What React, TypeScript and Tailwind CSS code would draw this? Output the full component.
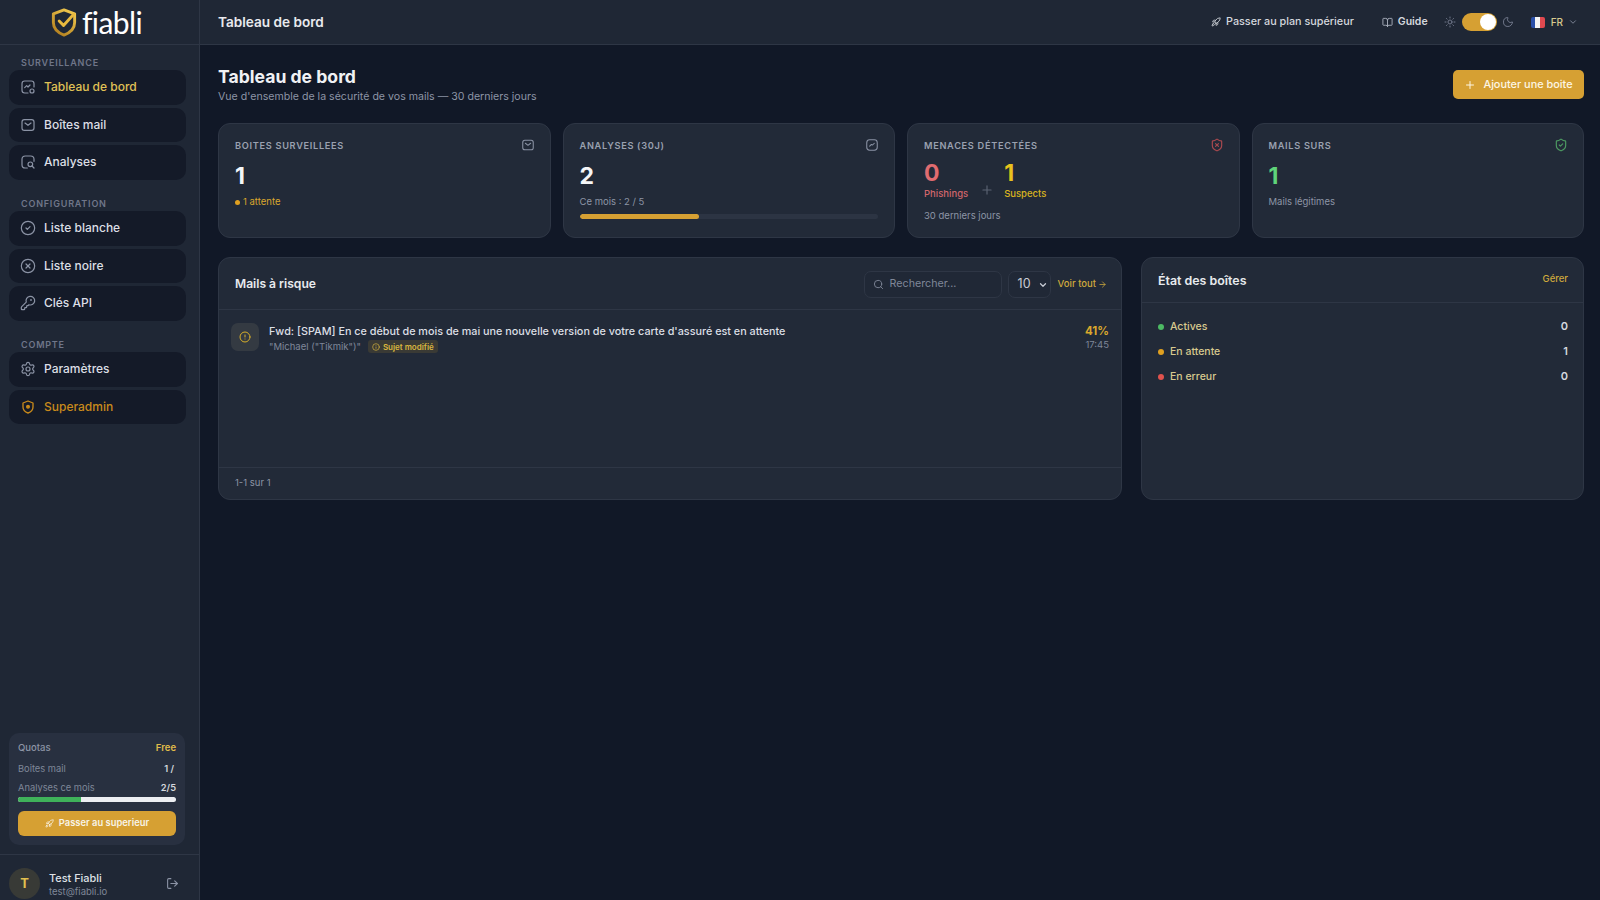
import { ArrowRight, BookOpen, ChevronDown, CircleAlert, CircleCheck, CircleX, Info, KeyRound, LogOut, Moon, Plus, Rocket, Search, Settings, ShieldCheck, ShieldX, Sun } from 'lucide-react';
import type { ReactNode } from 'react';

const font = "font-['Inter','Liberation_Sans',sans-serif]";

// Icones maison : lucide n'a pas exactement ces formes
function DashIcon() {
  return (
    <svg width="16" height="16" viewBox="0 0 24 24" fill="none" stroke="currentColor" strokeWidth="1.8" strokeLinecap="round" strokeLinejoin="round">
      <path d="M12 21H7a4 4 0 0 1-4-4V7a4 4 0 0 1 4-4h10a4 4 0 0 1 4 4v5" />
      <path d="M7 13l3-3 2 2 3-3" />
      <circle cx="18" cy="18" r="3" />
    </svg>
  );
}

function MailIcon({ size = 16 }: { size?: number }) {
  return (
    <svg width={size} height={size} viewBox="0 0 24 24" fill="none" stroke="currentColor" strokeWidth="1.8" strokeLinecap="round" strokeLinejoin="round">
      <rect x="3" y="4" width="18" height="16" rx="3.5" />
      <path d="M7.5 9l4.5 3.5L16.5 9" />
    </svg>
  );
}

function ScanIcon() {
  return (
    <svg width="16" height="16" viewBox="0 0 24 24" fill="none" stroke="currentColor" strokeWidth="1.8" strokeLinecap="round" strokeLinejoin="round">
      <path d="M11 21H8a5 5 0 0 1-5-5V8a5 5 0 0 1 5-5h8a5 5 0 0 1 5 5v3" />
      <circle cx="15.5" cy="15.5" r="3.5" />
      <path d="M18 18l3 3" />
    </svg>
  );
}

function ChartIcon() {
  return (
    <svg width="14" height="14" viewBox="0 0 24 24" fill="none" stroke="currentColor" strokeWidth="1.8" strokeLinecap="round" strokeLinejoin="round">
      <rect x="3" y="3" width="18" height="18" rx="5" />
      <path d="M8 14l3-3 2 1 3-3" />
    </svg>
  );
}

function AdminIcon() {
  return (
    <svg width="16" height="16" viewBox="0 0 24 24" fill="none" stroke="currentColor" strokeWidth="2" strokeLinecap="round" strokeLinejoin="round">
      <path d="M12 3l7.5 3v6c0 4.500-3 7.500-7.500 9-4.500-1.500-7.500-4.500-7.500-9V6z" />
      <circle cx="12" cy="11.500" r="2" fill="currentColor" />
    </svg>
  );
}

function FlagFr() {
  return (
    <span className="flex h-[11px] w-[14px] overflow-hidden rounded-[2px]">
      <span className="flex-1 bg-[#2a4fa8]" />
      <span className="flex-1 bg-[#f4f4f4]" />
      <span className="flex-1 bg-[#e0494f]" />
    </span>
  );
}

function Logo() {
  return (
    <div className="flex items-center gap-[5px] pr-[6px]">
      <svg width="26" height="29" viewBox="0 0 26 30" fill="none">
        <defs>
          <linearGradient id="logoGold" x1="0.8" y1="0" x2="0.2" y2="1">
            <stop offset="0" stopColor="#f0c84e" />
            <stop offset="1" stopColor="#b27f1f" />
          </linearGradient>
        </defs>
        <path d="M13 2L24 6v9c0 6.500-4.500 10.500-11 13C6.500 25.500 2 21.500 2 15V6z" stroke="url(#logoGold)" strokeWidth="3" strokeLinejoin="round" />
        <path d="M8 13.500l4.500 4.500L23 6.500" stroke="#e8b93f" strokeWidth="3" strokeLinecap="round" strokeLinejoin="round" />
      </svg>
      <span className="font-['Lato',sans-serif] text-[30px] font-normal leading-none tracking-[-0.6px] text-white">fiabli</span>
    </div>
  );
}

function NavItem({ icon, label, color = 'text-[#dcdfe5]' }: { icon: ReactNode; label: string; color?: string }) {
  return (
    <div className={`flex h-[34.5px] items-center gap-[8px] rounded-[10px] bg-[#141a28] pl-[11px] text-[12px] font-medium ${color}`}>
      <span className={label === 'Superadmin' ? 'text-[#c98a1b]' : 'text-[#8b93a5]'}>{icon}</span>
      {label}
    </div>
  );
}

function NavGroup({ title, children }: { title: string; children: ReactNode }) {
  return (
    <div>
      <div className="mb-[1px] pl-[21px] text-[9px] font-semibold leading-[13px] tracking-[0.8px] text-[#6f7689]">{title}</div>
      <div className="flex flex-col gap-[3px] pl-[9px] pr-[13px]">{children}</div>
    </div>
  );
}

function Sidebar() {
  return (
    <aside className="flex h-[900px] w-[200px] shrink-0 flex-col border-r border-[#2e3645] bg-[#1f2735]">
      <div className="flex h-[45px] shrink-0 items-center justify-center border-b border-[#2e3645]">
        <Logo />
      </div>
      <div className="flex flex-col gap-[17.5px] pt-[11px]">
        <NavGroup title="SURVEILLANCE">
          <NavItem icon={<DashIcon />} label="Tableau de bord" color="text-[#e0c256]" />
          <NavItem icon={<MailIcon />} label="Boîtes mail" />
          <NavItem icon={<ScanIcon />} label="Analyses" />
        </NavGroup>
        <NavGroup title="CONFIGURATION">
          <NavItem icon={<CircleCheck size={16} strokeWidth={1.8} />} label="Liste blanche" />
          <NavItem icon={<CircleX size={16} strokeWidth={1.8} />} label="Liste noire" />
          <NavItem icon={<KeyRound size={16} strokeWidth={1.8} />} label="Clés API" />
        </NavGroup>
        <NavGroup title="COMPTE">
          <NavItem icon={<Settings size={16} strokeWidth={1.8} />} label="Paramètres" />
          <NavItem icon={<AdminIcon />} label="Superadmin" color="text-[#c98a1b]" />
        </NavGroup>
      </div>
      <div className="mt-auto pb-[9px] pl-[9px] pr-[14px]">
        <div className="rounded-[10px] bg-[#283040] p-[9px]">
          <div className="flex justify-between text-[9.5px] font-medium leading-[12px]">
            <span className="text-[#8d95a6]">Quotas</span>
            <span className="font-semibold text-[#e0bc4a]">Free</span>
          </div>
          <div className="mt-[9px] flex justify-between text-[9.3px] leading-[12px]">
            <span className="text-[#7f8798]">Boites mail</span>
            <span className="pr-[2px] font-semibold text-[#d5d8de]">1 /</span>
          </div>
          <div className="mt-[7px] flex justify-between text-[9.3px] leading-[12px]">
            <span className="text-[#7f8798]">Analyses ce mois</span>
            <span className="font-semibold text-[#d5d8de]">2/5</span>
          </div>
          <div className="mt-[3px] h-[5px] overflow-hidden rounded-full bg-[#eceef2]">
            <div className="h-full w-[40%] bg-[#3fb25a]" />
          </div>
          <div className="mt-[9px] flex h-[25px] items-center justify-center gap-[5px] rounded-[6px] bg-[#d6a033] text-[9.4px] font-semibold text-[#f8f3e6]">
            <Rocket size={9} />
            Passer au superieur
          </div>
        </div>
      </div>
      <div className="flex h-[46px] shrink-0 items-start border-t border-[#2e3645] pl-[9px] pr-[20px] pt-[13px]">
        <div className="flex h-[31px] w-[31px] shrink-0 items-center justify-center rounded-full bg-[#383a36] text-[13px] font-bold text-[#e3c04f]">T</div>
        <div className="ml-[9px] min-w-0 flex-1 pt-[3px]">
          <div className="text-[10.9px] font-medium leading-[14px] text-[#dfe2e7]">Test Fiabli</div>
          <div className="text-[9.5px] leading-[13px] text-[#7f8798]">test@fiabli.io</div>
        </div>
        <LogOut size={13} className="mt-[9px] text-[#8b93a5]" />
      </div>
    </aside>
  );
}

function TopBar() {
  return (
    <header className="flex h-[45px] shrink-0 items-center border-b border-[#2e3645] bg-[#1f2735] pl-[18px] pr-[22px]">
      <div className="text-[13.6px] font-semibold text-[#e8eaee]">Tableau de bord</div>
      <div className="ml-auto flex items-center text-[#d5d8de]">
        <div className="flex items-center gap-[5px] text-[10.8px] font-medium">
          <Rocket size={10} />
          Passer au plan supérieur
        </div>
        <div className="ml-[28px] flex items-center gap-[5px] text-[10.5px] font-semibold">
          <BookOpen size={11} className="text-[#aab0bd]" />
          Guide
        </div>
        <Sun size={12} className="ml-[16px] text-[#6f7689]" />
        <div className="ml-[6px] flex h-[18px] w-[35px] items-center justify-end rounded-full bg-[#d6a033] pr-[1px]">
          <span className="h-[16px] w-[16px] rounded-full bg-white" />
        </div>
        <Moon size={12} className="ml-[5px] text-[#6f7689]" />
        <div className="ml-[17px]"><FlagFr /></div>
        <span className="ml-[6px] text-[10px] font-medium text-[#d8c98e]">FR</span>
        <ChevronDown size={10} className="ml-[5px] text-[#8b93a5]" />
      </div>
    </header>
  );
}

function StatCard({ title, icon, children }: { title: string; icon: ReactNode; children: ReactNode }) {
  return (
    <div className="h-[115px] rounded-[12px] border border-[#2e3645] bg-[#222a38] pl-[16px] pr-[15px] pt-[14px]">
      <div className="flex items-center justify-between">
        <div className="text-[9.2px] font-semibold leading-[13px] tracking-[0.7px] text-[#9aa1b0]">{title}</div>
        {icon}
      </div>
      {children}
    </div>
  );
}

function Legend({ dot, label, value }: { dot: string; label: string; value: string }) {
  return (
    <div className="flex h-[25px] items-center text-[10.5px]">
      <span className={`h-[6px] w-[6px] rounded-full ${dot}`} />
      <span className="ml-[6px] font-medium text-[#d8c98e]">{label}</span>
      <span className="ml-auto text-[11px] font-semibold text-[#d5d8de]">{value}</span>
    </div>
  );
}

export default function App() {
  return (
    <div className={`flex h-[900px] w-[1600px] overflow-hidden bg-[#111827] ${font}`}>
      <Sidebar />
      <div className="flex min-w-0 flex-1 flex-col">
        <TopBar />
        <main className="pl-[18px] pr-[16px]">
          <div className="flex items-start justify-between pt-[21px]">
            <div>
              <h1 className="text-[17.6px] font-bold leading-[22px] text-[#f0f1f4]">Tableau de bord</h1>
              <p className="mt-[2px] text-[10.6px] leading-[14px] text-[#8d95a6]">Vue d'ensemble de la sécurité de vos mails — 30 derniers jours</p>
            </div>
            <div className="mt-[4px] flex h-[29px] w-[131px] items-center justify-center gap-[7px] rounded-[5px] bg-[#d6a033] text-[10.9px] font-medium text-[#fdf6e3]">
              <Plus size={12} />
              Ajouter une boite
            </div>
          </div>

          <div className="mt-[19px] grid grid-cols-4 gap-[12px]">
            <StatCard title="BOITES SURVEILLEES" icon={<span className="text-[#8b93a5]"><MailIcon size={14} /></span>}>
              <div className="mt-[10px] text-[23px] font-bold leading-[28px] text-[#f5f6f8]">1</div>
              <div className="mt-[6px] flex items-center gap-[3px] text-[9.5px] leading-[12px] text-[#d9a72d]">
                <span className="h-[5px] w-[5px] rounded-full bg-[#e0a020]" />
                1 attente
              </div>
            </StatCard>
            <StatCard title="ANALYSES (30J)" icon={<span className="text-[#8b93a5]"><ChartIcon /></span>}>
              <div className="mt-[10px] text-[23px] font-bold leading-[28px] text-[#f5f6f8]">2</div>
              <div className="mt-[6px] text-[9.5px] leading-[12px] text-[#8d95a6]">Ce mois : 2 / 5</div>
              <div className="mr-[1px] mt-[6px] h-[5px] overflow-hidden rounded-full bg-[#2c3443]">
                <div className="h-full w-[40%] rounded-full bg-[#d6a033]" />
              </div>
            </StatCard>
            <StatCard title="MENACES DÉTECTÉES" icon={<ShieldX size={14} className="text-[#a8494f]" />}>
              <div className="mt-[7px] flex">
                <div>
                  <div className="text-[23px] font-bold leading-[28px] text-[#e06c70]">0</div>
                  <div className="mt-[1px] text-[9.5px] font-medium leading-[12px] text-[#d0666b]">Phishings</div>
                </div>
                <Plus size={14} className="ml-[12px] mt-[24px] text-[#5a6272]" />
                <div className="ml-[10px]">
                  <div className="text-[23px] font-bold leading-[28px] text-[#e8c21c]">1</div>
                  <div className="mt-[1px] text-[9.5px] font-medium leading-[12px] text-[#d9b41f]">Suspects</div>
                </div>
              </div>
              <div className="mt-[10px] text-[9.5px] leading-[12px] text-[#8d95a6]">30 derniers jours</div>
            </StatCard>
            <StatCard title="MAILS SURS" icon={<ShieldCheck size={14} className="text-[#4d9a62]" />}>
              <div className="mt-[10px] text-[23px] font-bold leading-[28px] text-[#5fd47a]">1</div>
              <div className="mt-[6px] text-[9.5px] leading-[12px] text-[#8d95a6]">Mails légitimes</div>
            </StatCard>
          </div>

          <div className="mt-[19px] grid grid-cols-[904px_1fr] gap-[19px]">
            <section className="flex h-[243px] flex-col rounded-[12px] border border-[#2e3645] bg-[#222a38]">
              <div className="flex h-[52px] shrink-0 items-center border-b border-[#2e3645] pl-[16px] pr-[14px] pt-[2px]">
                <h2 className="text-[12.1px] font-semibold text-[#e8eaee]">Mails à risque</h2>
                <div className="ml-auto flex h-[27px] w-[138px] items-center gap-[6px] rounded-[7px] border border-[#2e3645] bg-[#202836] pl-[8px] text-[10.7px] text-[#7f8798]">
                  <Search size={11} />
                  Rechercher...
                </div>
                <div className="ml-[6px] flex h-[27px] w-[43px] items-center justify-between rounded-[7px] border border-[#2e3645] bg-[#202836] pl-[9px] pr-[2px] text-[12.5px] text-[#c8ccd4]">
                  10
                  <ChevronDown size={10} strokeWidth={3} />
                </div>
                <div className="ml-[7px] flex items-center gap-[2px] text-[9.5px] font-medium text-[#cfa93c]">
                  Voir tout
                  <ArrowRight size={9} />
                </div>
              </div>
              <div className="flex flex-1 items-start px-[12px] pt-[13px]">
                <div className="flex h-[28px] w-[28px] shrink-0 items-center justify-center rounded-[7px] bg-[#343a42] text-[#d9b02a]">
                  <CircleAlert size={12} />
                </div>
                <div className="ml-[10px] min-w-0 flex-1 pt-[2px]">
                  <div className="text-[10.8px] font-medium leading-[14px] text-[#dcdfe5]">Fwd: [SPAM] En ce début de mois de mai une nouvelle version de votre carte d'assuré est en attente</div>
                  <div className="mt-[1px] flex items-center gap-[7px] text-[9.5px] leading-[12px] text-[#7f8798]">
                    "Michael ("Tikmik")"
                    <span className="flex h-[13px] items-center gap-[3px] rounded-[3px] bg-[#3a3a35] px-[4px] text-[8px] font-semibold text-[#d9b73f]">
                      <Info size={8} />
                      Sujet modifié
                    </span>
                  </div>
                </div>
                <div className="pt-[1px] text-right">
                  <div className="text-[11.5px] font-bold leading-[14px] text-[#d9a72d]">41%</div>
                  <div className="mt-[1px] text-[9.5px] leading-[12px] text-[#7f8798]">17:45</div>
                </div>
              </div>
              <div className="flex h-[32px] shrink-0 items-center border-t border-[#2e3645] pl-[16px] text-[9.5px] text-[#8d95a6]">1-1 sur 1</div>
            </section>
            <section className="h-[243px] rounded-[12px] border border-[#2e3645] bg-[#222a38]">
              <div className="flex h-[45px] justify-between border-b border-[#2e3645] pl-[16px] pr-[15px]">
                <h2 className="mt-[15px] text-[12.4px] font-semibold leading-[15px] text-[#e8eaee]">État des boîtes</h2>
                <span className="mt-[15px] text-[9.5px] font-medium leading-[12px] text-[#cfa93c]">Gérer</span>
              </div>
              <div className="pl-[16px] pr-[15px] pt-[11px]">
                <Legend dot="bg-[#4cb963]" label="Actives" value="0" />
                <Legend dot="bg-[#e0a020]" label="En attente" value="1" />
                <Legend dot="bg-[#e0524d]" label="En erreur" value="0" />
              </div>
            </section>
          </div>
        </main>
      </div>
    </div>
  );
}
